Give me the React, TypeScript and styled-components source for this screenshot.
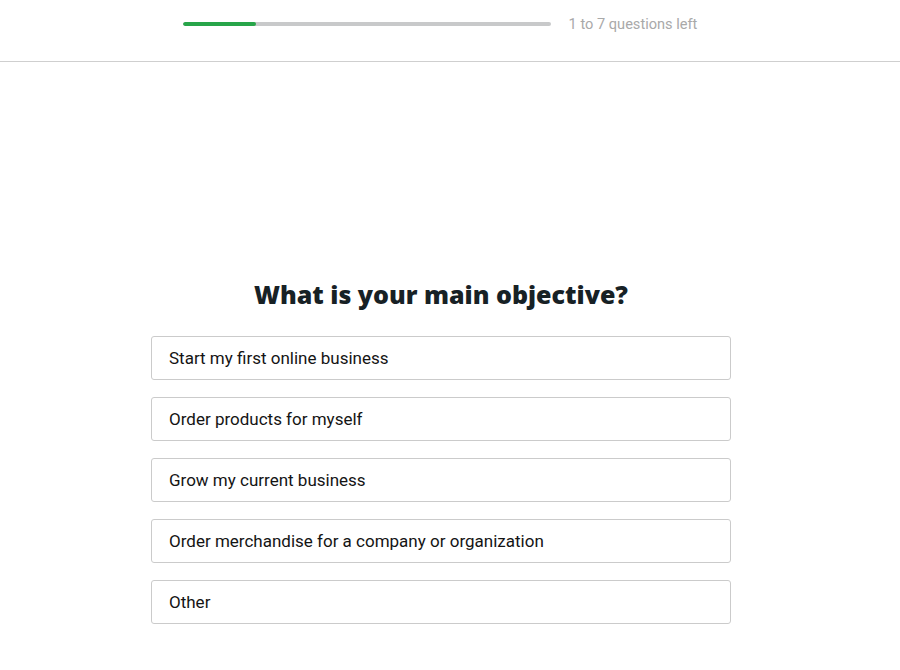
import React from "react";
import styled, { createGlobalStyle } from "styled-components";

const Global = createGlobalStyle`
  html, body { margin: 0; padding: 0; background: #fff; }
  body { font-family: Roboto, "Liberation Sans", sans-serif; }
`;

const Header = styled.header`
  height: 62px;
  border-bottom: 1px solid #cfcfcf;
  display: flex;
  align-items: center;
  justify-content: center;
  padding-right: 20px;
  padding-bottom: 14px;
  box-sizing: border-box;
  gap: 18px;
`;

const Track = styled.div`
  width: 368px;
  height: 4px;
  border-radius: 2px;
  background: #c8c9ca;
  overflow: hidden;
`;

const Fill = styled.div`
  height: 100%;
  background: #27a549;
  border-radius: 2px;
`;

const ProgressText = styled.span`
  font-size: 14.6px;
  color: #a9a9a9;
`;

const Main = styled.main`
  display: flex;
  flex-direction: column;
  align-items: center;
  padding-top: 214px;
  padding-right: 18px;
`;

const Title = styled.h1`
  margin: 0 0 24px;
  font-family: "Open Sans", Lato, sans-serif;
  font-weight: 800;
  font-size: 25px;
  line-height: 36px;
  color: #172125;
`;

const Options = styled.div`
  display: flex;
  flex-direction: column;
  gap: 17px;
  width: 580px;
`;

const Option = styled.button`
  height: 44px;
  box-sizing: border-box;
  border: 1px solid #cbcbcb;
  border-radius: 3px;
  background: #fff;
  padding: 0 17px;
  text-align: left;
  font-family: Roboto, "Liberation Sans", sans-serif;
  font-size: 17px;
  color: #141414;
  cursor: pointer;
`;

const options = [
  "Start my first online business",
  "Order products for myself",
  "Grow my current business",
  "Order merchandise for a company or organization",
  "Other",
];

export default function App() {
  return (
    <>
      <Global />
      <Header>
        <Track>
          <Fill style={{ width: `${(73 / 368) * 100}%` }} />
        </Track>
        <ProgressText>1 to 7 questions left</ProgressText>
      </Header>
      <Main>
        <Title>What is your main objective?</Title>
        <Options>
          {options.map((o) => (
            <Option key={o}>{o}</Option>
          ))}
        </Options>
      </Main>
    </>
  );
}
